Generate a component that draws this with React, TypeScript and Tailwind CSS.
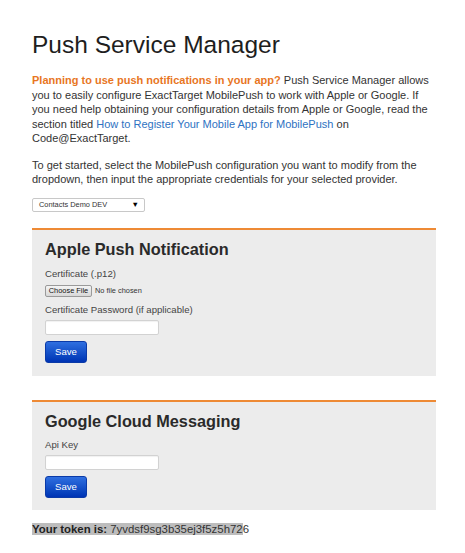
import React from "react";

function SaveButton() {
  return (
    <button className="mt-[6px] flex h-[22px] w-[42px] items-center justify-center rounded-[3px] border border-[#0a3aa8] bg-gradient-to-b from-[#2f6fe0] to-[#0033b4] text-[9.6px] text-white">
      Save
    </button>
  );
}

function TextInput() {
  return (
    <div className="mt-[4px] h-[15px] w-[114px] rounded-[2px] border border-[#d2d2d2] bg-white shadow-[inset_0_1px_1px_rgba(0,0,0,0.06)]" />
  );
}

export default function App() {
  return (
    <div className="min-h-[553px] bg-white font-['Liberation_Sans',Arial,sans-serif] text-[#333]">
      <div className="ml-[32px] w-[404px] pt-[31px]">
        <h1 className="whitespace-nowrap text-[24.5px] leading-[28px] text-[#1e1e1e]">
          Push Service Manager
        </h1>
        <p className="mt-[14px] text-[11px] leading-[14.5px]">
          <span className="block whitespace-nowrap">
            <b className="text-[#e8761f]">Planning to use push notifications in your app?</b> Push Service Manager allows
          </span>
          <span className="block whitespace-nowrap">
            you to easily configure ExactTarget MobilePush to work with Apple or Google. If
          </span>
          <span className="block whitespace-nowrap">
            you need help obtaining your configuration details from Apple or Google, read the
          </span>
          <span className="block whitespace-nowrap">
            section titled <span className="text-[#2e72c2]">How to Register Your Mobile App for MobilePush</span> on
          </span>
          <span className="block whitespace-nowrap">Code@ExactTarget.</span>
        </p>
        <p className="mt-[12px] text-[11px] leading-[14.5px]">
          <span className="block whitespace-nowrap">
            To get started, select the MobilePush configuration you want to modify from the
          </span>
          <span className="block whitespace-nowrap">
            dropdown, then input the appropriate credentials for your selected provider.
          </span>
        </p>
        <div className="mt-[11.5px] flex h-[14px] w-[113px] items-center justify-between rounded-[2px] border border-[#c8c8c8] bg-white pl-[6px] pr-[5px] text-[7.4px] text-[#333]">
          <span className="whitespace-nowrap">Contacts Demo DEV</span>
          <span className="text-[7.5px] leading-none text-black">▼</span>
        </div>

        <div className="mt-[16px] border-t-2 border-[#ee8a35] bg-[#ececec] pb-[13px] pl-[13px] pt-[9px]">
          <h2 className="text-[16.3px] font-bold leading-[20px] text-[#2a2a2a]">
            Apple Push Notification
          </h2>
          <div className="mt-[8.5px] text-[9.6px] leading-[12px] text-[#444]">Certificate (.p12)</div>
          <div className="mt-[5.5px] flex h-[12px] items-center">
            <div className="flex h-[12px] w-[47px] items-center justify-center rounded-[2px] border border-[#9a9a9a] bg-gradient-to-b from-[#f4f4f4] to-[#d8d8d8] text-[7.4px] font-medium text-[#111]">
              Choose File
            </div>
            <span className="ml-[3px] whitespace-nowrap text-[7.4px] text-[#333]">No file chosen</span>
          </div>
          <div className="mt-[7px] text-[9.6px] leading-[12px] text-[#444]">
            Certificate Password (if applicable)
          </div>
          <TextInput />
          <SaveButton />
        </div>

        <div className="mt-[24px] border-t-2 border-[#ee8a35] bg-[#ececec] pb-[12px] pl-[13px] pt-[9px]">
          <h2 className="text-[16.3px] font-bold leading-[20px] text-[#2a2a2a]">
            Google Cloud Messaging
          </h2>
          <div className="mt-[8px] text-[9.6px] leading-[12px] text-[#444]">Api Key</div>
          <TextInput />
          <SaveButton />
        </div>

        <p className="mt-[12px] whitespace-nowrap text-[11.4px] leading-[14.5px]">
          <span className="bg-[#bdbdbd]">
            <b className="text-[#222]">Your token is:</b> 7yvdsf9sg3b35ej3f5z5h72
          </span>
          6
        </p>
      </div>
    </div>
  );
}
